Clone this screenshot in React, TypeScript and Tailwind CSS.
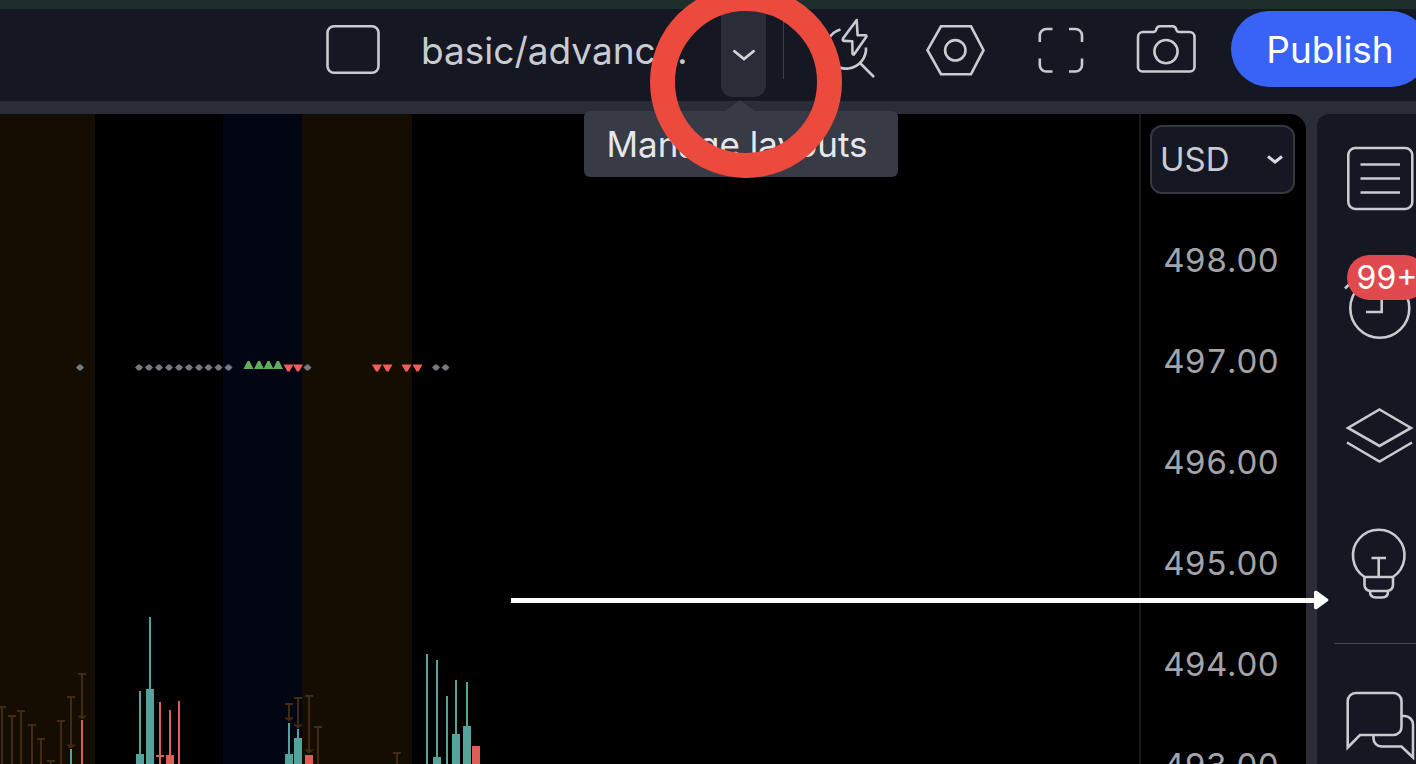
import React from 'react';

const TEAL = '#55a49b';
const RED = '#dd5e57';

const prices = ['498.00', '497.00', '496.00', '495.00', '494.00', '493.00'];

const sessions = [
  { x: 0, width: 95, color: '#140d02' },
  { x: 223, width: 79, color: '#020612' },
  { x: 302, width: 110, color: '#140d02' },
];

// body is the top of the candle body, when it is in view
const candles = [
  { x: 71, wick: 635, color: TEAL },
  { x: 82, wick: 606, color: RED },
  { x: 140, wick: 577, body: 640, color: TEAL },
  { x: 150, wick: 503, body: 575, color: TEAL },
  { x: 160, wick: 588, color: RED },
  { x: 170, wick: 596, body: 641, color: RED },
  { x: 179, wick: 587, color: RED },
  { x: 289, wick: 609, body: 640, color: TEAL },
  { x: 298, wick: 615, body: 624, color: TEAL },
  { x: 309, wick: 641, body: 641, color: RED },
  { x: 427, wick: 540, color: TEAL },
  { x: 437, wick: 546, body: 643, color: TEAL },
  { x: 447, wick: 582, color: TEAL },
  { x: 456, wick: 566, body: 620, color: TEAL },
  { x: 467, wick: 568, body: 612, color: TEAL },
  { x: 476, wick: 632, body: 632, color: RED },
];

const whiskers = [
  { x: 2, top: 593 },
  { x: 12, top: 602 },
  { x: 21, top: 597 },
  { x: 32, top: 611 },
  { x: 41, top: 625 },
  { x: 51, top: 647 },
  { x: 61, top: 607 },
  { x: 71, top: 583, bottom: 632 },
  { x: 82, top: 560, bottom: 603 },
  { x: 289, top: 590, bottom: 605 },
  { x: 298, top: 584, bottom: 612 },
  { x: 309, top: 582, bottom: 637 },
  { x: 318, top: 613 },
  { x: 397, top: 639 },
];

const neutral = [80, 139, 149, 159, 169, 179, 189, 199, 208.5, 218.5, 228.5, 307.5, 436, 445.5];
const ups = [248.5, 259, 268.5, 278];
const downs = [288.5, 298, 377, 387.5, 406.5, 417.5];

const Icon = ({ children }: { children: React.ReactNode }) => (
  <svg
    width="72"
    height="72"
    viewBox="0 0 72 72"
    fill="none"
    stroke="#c9cbd1"
    strokeWidth="2.6"
    className="shrink-0 overflow-visible"
    aria-hidden="true"
  >
    {children}
  </svg>
);

const tools = [
  {
    label: 'Quick search',
    icon: (
      <Icon>
        <path d="M28.5 15.4A20 20 0 1 0 54 33.500M47.500 48.500 62 63" />
        <path d="M44.700 6 31 24.500Q30 26.800 32.500 26.900L40.300 27.200 40.500 39.500Q41 41.500 42.500 39.800L54.500 22.500 54 21.300 45.600 21.200Z" strokeLinejoin="round" />
      </Icon>
    ),
  },
  {
    label: 'Settings',
    icon: (
      <Icon>
        <path d="M9.500 36.200 23 12.300H53L65.500 36.200 53 60.200H23Z" />
        <circle cx="37.300" cy="36.300" r="10.200" />
      </Icon>
    ),
  },
  {
    label: 'Fullscreen mode',
    icon: (
      <Icon>
        <path d="M15.800 28V21.500a6.500 6.500 0 0 1 6.500-6.500H28.500M45 15h6.500a6.500 6.500 0 0 1 6.500 6.500V28M58 44.500V51a6.500 6.500 0 0 1-6.500 6.500H45M28.500 57.500H22.300a6.500 6.500 0 0 1-6.500-6.500V44.500" />
      </Icon>
    ),
  },
  {
    label: 'Take a snapshot',
    icon: (
      <Icon>
        <path d="M12.500 18H23Q25.500 18 26 16Q26.800 12.300 30 12.300H42.500Q45.700 12.300 46.500 16Q47 18 49.500 18H59.500a5 5 0 0 1 5 5V53a4.500 4.500 0 0 1-4.500 4.500H12.500a4.500 4.500 0 0 1-4.500-4.500V23a5 5 0 0 1 4.500-5Z" />
        <circle cx="36" cy="37.600" r="11.600" />
      </Icon>
    ),
  },
];

const sideItems = [
  {
    label: 'Watchlist',
    icon: (
      <Icon>
        <rect x="4.300" y="5" width="64" height="61" rx="7" />
        <path d="M16.500 21.500H56M16.500 35.500H56M16.500 49.500H56" />
      </Icon>
    ),
  },
  {
    label: 'Alerts',
    badge: '99+',
    icon: (
      <Icon>
        <circle cx="35.800" cy="37.200" r="29.500" />
        <path d="M37.700 20V41H22M1 17.500 5 13.500" />
      </Icon>
    ),
  },
  {
    label: 'Object tree',
    icon: (
      <Icon>
        <path d="M35.500 10.500 67 29 35.500 47 4 29ZM3 43.500 35.500 62.500 68 43.500" />
      </Icon>
    ),
  },
  {
    label: 'Ideas',
    icon: (
      <Icon>
        <path d="M20.500 50A25.800 25.800 0 1 1 49 50ZM20.500 50V58a6 6 0 0 0 6 6H43a6 6 0 0 0 6-6V50M26 64.500c0 4 2.500 6 6 6h6c3.500 0 6-2 6-6M27.500 31H42M34.700 31V50" />
      </Icon>
    ),
  },
];

const Header = () => (
  <header className="relative z-10 flex h-[92px] shrink-0 items-start justify-end bg-[#151722] pt-0.5">
    <button aria-label="Select layout" className="flex h-[76px] w-[72px] shrink-0 items-center justify-center">
      <Icon>
        <rect x="10.500" y="13.300" width="51" height="46.500" rx="6.500" />
      </Icon>
    </button>
    <button className="ml-8 h-20 w-[300px] shrink-0 text-left text-[37px] text-[#c9cbd1]">
      basic/advanc...
    </button>
    <div className="relative mr-[17px] shrink-0">
      <button
        aria-label="Manage layouts"
        aria-describedby="layouts-tip"
        className="flex h-[86px] w-[45px] items-center justify-center rounded-b-xl bg-[#2a2c37] pt-0.5"
      >
        <svg width="24" height="14" viewBox="0 0 24 14" fill="none" stroke="#d1d3d8" strokeWidth="2.8" aria-hidden="true">
          <path d="M1.500 2.500 12 11 22.500 2.500" />
        </svg>
      </button>
      <div
        id="layouts-tip"
        role="tooltip"
        className="absolute top-[100px] left-5 flex h-[66px] w-[314px] -translate-x-1/2 items-center justify-center rounded-md bg-[#383a45] pr-2 text-[35px] whitespace-nowrap text-[#e6e7ea]"
      >
        <svg width="30" height="11" viewBox="0 0 30 11" className="absolute bottom-full left-[141px]" fill="#383a45" aria-hidden="true">
          <path d="M0 11 15 0 30 11Z" />
        </svg>
        Manage layouts
      </div>
      <div className="pointer-events-none absolute -top-[25px] left-1/2 size-48 -translate-x-[94px] rounded-full border-[25px] border-[#ec4a3d]" />
    </div>
    <div className="mt-2 mr-[11px] h-[60px] w-px shrink-0 bg-[#3c3e48]" />
    {/* drawn under the highlight ring */}
    <div className="relative -z-10 flex shrink-0">
      {tools.map((tool) => (
        <button key={tool.label} aria-label={tool.label} className="flex h-[77px] w-[106px] items-center justify-center">
          {tool.icon}
        </button>
      ))}
    </div>
    <button className="-mr-[13px] ml-3 h-[76px] w-[198px] shrink-0 rounded-full bg-[#3963f7] pt-0.5 text-[37px] text-white">
      Publish
    </button>
  </header>
);

const Chart = () => (
  <svg className="h-full min-w-0 flex-1" role="img" aria-label="Price chart">
    {sessions.map((s) => (
      <rect key={s.x} x={s.x} y="0" width={s.width} height="100%" fill={s.color} />
    ))}
    {whiskers.map((w) => (
      <g key={w.x} stroke="#422b0e" strokeWidth="2">
        <path d={`M${w.x} ${w.top}V${w.bottom ?? 660}M${w.x - 4} ${w.top}h8`} />
        {w.bottom && <path d={`M${w.x - 4} ${w.bottom - 1}h8l-4 3z`} strokeWidth="1" fill="#422b0e" />}
      </g>
    ))}
    {candles.map((c) => (
      <g key={c.x} fill={c.color}>
        <rect x={c.x - 1} y={c.wick} width="2" height="160" />
        {c.body && <rect x={c.x - 4} y={c.body} width="8" height="100" />}
      </g>
    ))}
    <rect x="156" y="641" width="8" height="2" fill={RED} />
    {neutral.map((x) => (
      <path key={x} d={`M${x - 4} 253.500l3-3h2l3 3-3 3h-2z`} fill="#777982" />
    ))}
    {ups.map((x) => (
      <path key={x} d={`M${x - 5} 255l4-8h2l4 8z`} fill="#62ad5b" />
    ))}
    {downs.map((x) => (
      <path key={x} d={`M${x - 5} 250.500h10l-4 7h-2z`} fill="#ee5f58" />
    ))}
  </svg>
);

const PriceScale = () => (
  <div className="flex w-[167px] shrink-0 flex-col border-l-2 border-[#17171a] pt-[11px]">
    <div className="relative mr-[11px] ml-[9px] shrink-0">
      <select
        aria-label="Currency"
        className="h-[69px] w-full appearance-none rounded-xl border-2 border-[#353741] bg-[#151722] pl-2 text-[33px] text-[#c9cbd1]"
      >
        <option>USD</option>
      </select>
      <svg width="16" height="10" viewBox="0 0 16 10" fill="none" stroke="#d9dade" strokeWidth="3" className="pointer-events-none absolute top-[30px] right-3" aria-hidden="true">
        <path d="M1 1.500 8 7 15 1.500" />
      </svg>
    </div>
    <div className="mt-4">
      {prices.map((price) => (
        <div key={price} className="flex h-[101px] items-center justify-end pr-[27px] text-[33px] text-[#a3a4a9] tabular-nums">
          {price}
        </div>
      ))}
    </div>
  </div>
);

const Sidebar = () => (
  <nav className="-mr-[27px] ml-[11px] flex w-[126px] shrink-0 flex-col rounded-tl-xl bg-[#151722] pt-px">
    {sideItems.map((item) => (
      <button key={item.label} aria-label={item.label} className="relative flex h-32 shrink-0 items-center justify-center">
        {item.icon}
        {item.badge && (
          <span className="absolute top-3 left-[30px] flex h-[45px] w-20 items-center justify-center rounded-full bg-[#e0494e] text-[32px] text-white">
            {item.badge}
          </span>
        )}
      </button>
    ))}
    <hr className="mt-4 ml-[17px] border-[#43454f]" />
    <button aria-label="Chats" className="flex h-40 shrink-0 items-center justify-center">
      <Icon>
        <path d="M3.700 59.500V13a8 8 0 0 1 8-8H49.500a8 8 0 0 1 8 8V39a8 8 0 0 1-8 8H16ZM57.500 28H60.500a8.500 8.500 0 0 1 8.500 8.500V69.500L57.500 58.500H37.500a8 8 0 0 1-8-8V47" />
      </Icon>
    </button>
  </nav>
);

const App = () => {
  return (
    <div className="relative flex h-screen flex-col overflow-hidden bg-[#2a2c37] font-['Inter',sans-serif]">
      <div className="h-[9px] shrink-0 bg-[#1d2e2b]" />
      <Header />
      <main className="relative mt-[13px] flex min-h-0 flex-1">
        <div className="flex min-w-0 flex-1 overflow-hidden rounded-tr-2xl bg-black">
          <Chart />
          <PriceScale />
        </div>
        <Sidebar />
        {/* pointer to the ideas button */}
        <div className="pointer-events-none absolute top-[476px] right-[87px] left-[511px] flex items-center">
          <div className="h-[5px] flex-1 bg-white" />
          <svg width="15" height="20" viewBox="0 0 15 20" fill="white" aria-hidden="true">
            <path d="M0 2Q1 0 3 1L14 9Q15 10 14 11L3 19Q1 20 0 18Z" />
          </svg>
        </div>
      </main>
    </div>
  );
};

export default App;
